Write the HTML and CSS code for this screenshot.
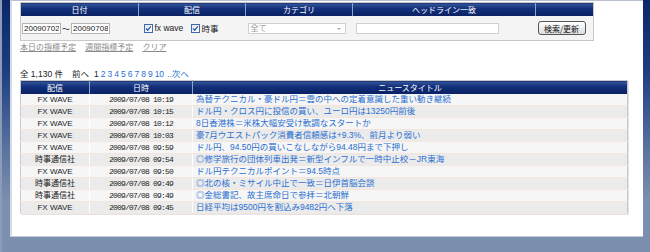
FILE: index.html
```html
<!DOCTYPE html>
<html lang="ja">

<head>
    <meta charset="UTF-8">
    <title>ニュース一覧</title>
    <link rel="stylesheet" href="styles.css">
</head>

<body>
    <div class="page">
        <table class="search">
            <tr class="head">
                <th class="c-date">日付</th>
                <th class="c-src">配信</th>
                <th class="c-cat">カテゴリ</th>
                <th class="c-word">ヘッドライン一致</th>
                <th class="c-btn"></th>
            </tr>
            <tr class="fields">
                <td class="c-date">
                    <input class="date" type="text" value="20090702"><span class="tilde">～</span><input class="date" type="text" value="20090708">
                </td>
                <td class="c-src">
                    <label class="check"><span class="box"><svg viewBox="0 0 9 9" width="7" height="7"><path d="M1.5 4.5l2 2.2L7.5 1.8" stroke="#2b58c4" stroke-width="1.6" fill="none"/></svg></span>fx wave</label>
                    <label class="check"><span class="box"><svg viewBox="0 0 9 9" width="7" height="7"><path d="M1.5 4.5l2 2.2L7.5 1.8" stroke="#2b58c4" stroke-width="1.6" fill="none"/></svg></span>時事</label>
                </td>
                <td class="c-cat">
                    <div class="select">全て<span class="arrow"></span></div>
                </td>
                <td class="c-word"><input class="keyword" type="text"></td>
                <td class="c-btn"><button type="button">検索/更新</button></td>
            </tr>
        </table>

        <div class="links">
            <a href="#">本日の指標予定</a>
            <a href="#">週間指標予定</a>
            <a href="#">クリア</a>
        </div>

        <div class="pager">
            全 1,130 件<span class="prev">前へ</span><span class="cur">1</span><a href="#">2</a><a href="#">3</a><a href="#">4</a><a href="#">5</a><a href="#">6</a><a href="#">7</a><a href="#">8</a><a href="#">9</a><a href="#">10</a><a href="#" class="next">..次へ</a>
        </div>

        <table class="news">
            <tr class="head">
                <th class="n-src">配信</th>
                <th class="n-time">日時</th>
                <th class="n-title">ニュースタイトル</th>
            </tr>
            <tr><td class="src">FX WAVE</td><td class="time">2009/07/08 10:19</td><td><a href="#">為替テクニカル・豪ドル円＝雲の中への定着意識した重い動き継続</a></td></tr>
            <tr><td class="src">FX WAVE</td><td class="time">2009/07/08 10:15</td><td><a href="#">ドル円・クロス円に投信の買い、ユーロ円は13250円前後</a></td></tr>
            <tr><td class="src">FX WAVE</td><td class="time">2009/07/08 10:12</td><td><a href="#">8日香港株＝米株大幅安受け軟調なスタートか</a></td></tr>
            <tr><td class="src">FX WAVE</td><td class="time">2009/07/08 10:03</td><td><a href="#">豪7月ウエストパック消費者信頼感は+9.3%、前月より弱い</a></td></tr>
            <tr><td class="src">FX WAVE</td><td class="time">2009/07/08 09:59</td><td><a href="#">ドル円、94.50円の買いこなしながら94.48円まで下押し</a></td></tr>
            <tr><td class="src jp">時事通信社</td><td class="time">2009/07/08 09:54</td><td><a href="#">◎修学旅行の団体列車出発＝新型インフルで一時中止校－JR東海</a></td></tr>
            <tr><td class="src">FX WAVE</td><td class="time">2009/07/08 09:50</td><td><a href="#">ドル円テクニカルポイント＝94.5時点</a></td></tr>
            <tr><td class="src jp">時事通信社</td><td class="time">2009/07/08 09:49</td><td><a href="#">◎北の核・ミサイル中止で一致＝日伊首脳会談</a></td></tr>
            <tr><td class="src jp">時事通信社</td><td class="time">2009/07/08 09:49</td><td><a href="#">◎金総書記、故主席命日で参拝＝北朝鮮</a></td></tr>
            <tr><td class="src">FX WAVE</td><td class="time">2009/07/08 09:45</td><td><a href="#">日経平均は9500円を割込み9482円へ下落</a></td></tr>
        </table>
    </div>
</body>

</html>
```

FILE: styles.css
```css
body {
    margin: 0;
    padding: 0;
    height: 252px;
    font-family: "Liberation Sans", "Noto Sans CJK JP", sans-serif;
    font-size: 8px;
    color: #222;
    background: linear-gradient(to bottom, #0b2767 0, #1d3d80 70px, #5a74a0 150px, #7b8fae 200px, #7b8fae 100%);
    border-left: 2px solid #8c9cb8;
    box-sizing: border-box;
}

.page {
    margin-left: 8px;
    width: 633px;
    height: 237px;
    box-sizing: border-box;
    background-color: #fff;
    border-left: 2px solid #d4dae6;
    border-top: 1px solid #b8c0d0;
    border-bottom: 1px solid #c4ccda;
    padding: 1px 0 0 8px;
}

table {
    border-collapse: collapse;
    table-layout: fixed;
}

th {
    height: 13px;
    padding: 0;
    color: #fff;
    font-weight: normal;
    font-size: 8px;
    background: linear-gradient(to bottom, #36569a 0, #12307a 40%, #0a2062 100%);
    border-left: 1px solid #8fa2c8;
    text-align: center;
}

th:first-child {
    border-left: none;
}

/* search form */
.search {
    width: 568px;
    border: 1px solid #c8c8c8;
}

.search .c-date { width: 117px; }
.search .c-src { width: 106px; }
.search .c-cat { width: 106px; }
.search .c-word { width: 182px; }
.search .c-btn { width: 57px; }

.fields td {
    height: 24px;
    padding: 0;
    background-color: #f4f4f4;
    vertical-align: middle;
}

.fields .c-date { padding-left: 1px; }
.fields .c-src { padding-left: 5px; }
.fields .c-cat { padding-left: 2px; }
.fields .c-word { padding-left: 3px; }
.fields .c-btn { padding-left: 2px; }

.date {
    width: 39px;
    height: 11px;
    box-sizing: border-box;
    padding: 0 1px;
    border: 1px solid #b4b4b4;
    font-family: "Liberation Sans", sans-serif;
    font-size: 8px;
    color: #222;
    vertical-align: middle;
}

.tilde {
    display: inline-block;
    width: 10px;
    text-align: center;
    vertical-align: middle;
}

.check {
    display: inline-flex;
    align-items: center;
    margin-right: 5px;
    font-size: 8.5px;
}

.box {
    display: inline-flex;
    align-items: center;
    justify-content: center;
    width: 9px;
    height: 9px;
    box-sizing: border-box;
    margin-right: 2px;
    border: 1px solid #3d6ab0;
    background: linear-gradient(to bottom right, #e6e6e0, #fff);
}

.select {
    position: relative;
    width: 98px;
    height: 11px;
    box-sizing: border-box;
    border: 1px solid #d0d0d0;
    background-color: #fff;
    color: #999;
    font-size: 8px;
    line-height: 9px;
    padding-left: 2px;
}

.arrow {
    position: absolute;
    right: 4px;
    top: 4px;
    border-left: 2px solid transparent;
    border-right: 2px solid transparent;
    border-top: 2px solid #aaa;
}

.keyword {
    display: block;
    width: 143px;
    height: 11px;
    box-sizing: border-box;
    border: 1px solid #d0d0d0;
    background-color: #fff;
}

button {
    width: 48px;
    height: 14px;
    padding: 0;
    font-family: "Noto Sans CJK JP", sans-serif;
    font-size: 8px;
    color: #111;
    background: linear-gradient(to bottom, #ffffff, #dcdcdc);
    border: 1px solid #555;
    border-radius: 3px;
    cursor: pointer;
}

/* links */
.links {
    height: 11px;
    line-height: 11px;
    margin-top: 1px;
}

.links a {
    color: #8a8a8a;
    margin-right: 7px;
}

.pager {
    margin-top: 16px;
    height: 11px;
    line-height: 11px;
    color: #222;
    font-size: 8.5px;
}

.pager .prev {
    margin: 0 5px 0 9px;
}

.pager .cur {
    margin-right: 2px;
}

.pager a {
    color: #2a6fd0;
    text-decoration: none;
    margin-right: 2px;
}

.pager .next {
    margin-left: 1px;
}

/* news list */
.news {
    width: 608px;
    border: 1px solid #c8c8c8;
    box-shadow: 1px 1px 0 #e4e4e4;
}

.news .n-src { width: 68px; }
.news .n-time { width: 102px; }

.news td {
    height: 11px;
    padding: 0;
    line-height: 11px;
    white-space: nowrap;
    overflow: hidden;
    background-color: #f6f6f6;
    border-bottom: 1px solid #f4e6dc;
    border-left: 1px solid #fff;
}

.news tr:nth-child(odd) td {
    background-color: #ebebeb;
}

.news td.src {
    text-align: center;
    border-left: none;
}

.news td.time {
    text-align: center;
    font-family: "Liberation Mono", monospace;
    letter-spacing: -0.8px;
}

.news td a {
    color: #2a6fd0;
    text-decoration: none;
    padding-left: 3px;
    font-size: 8.5px;
}
```
